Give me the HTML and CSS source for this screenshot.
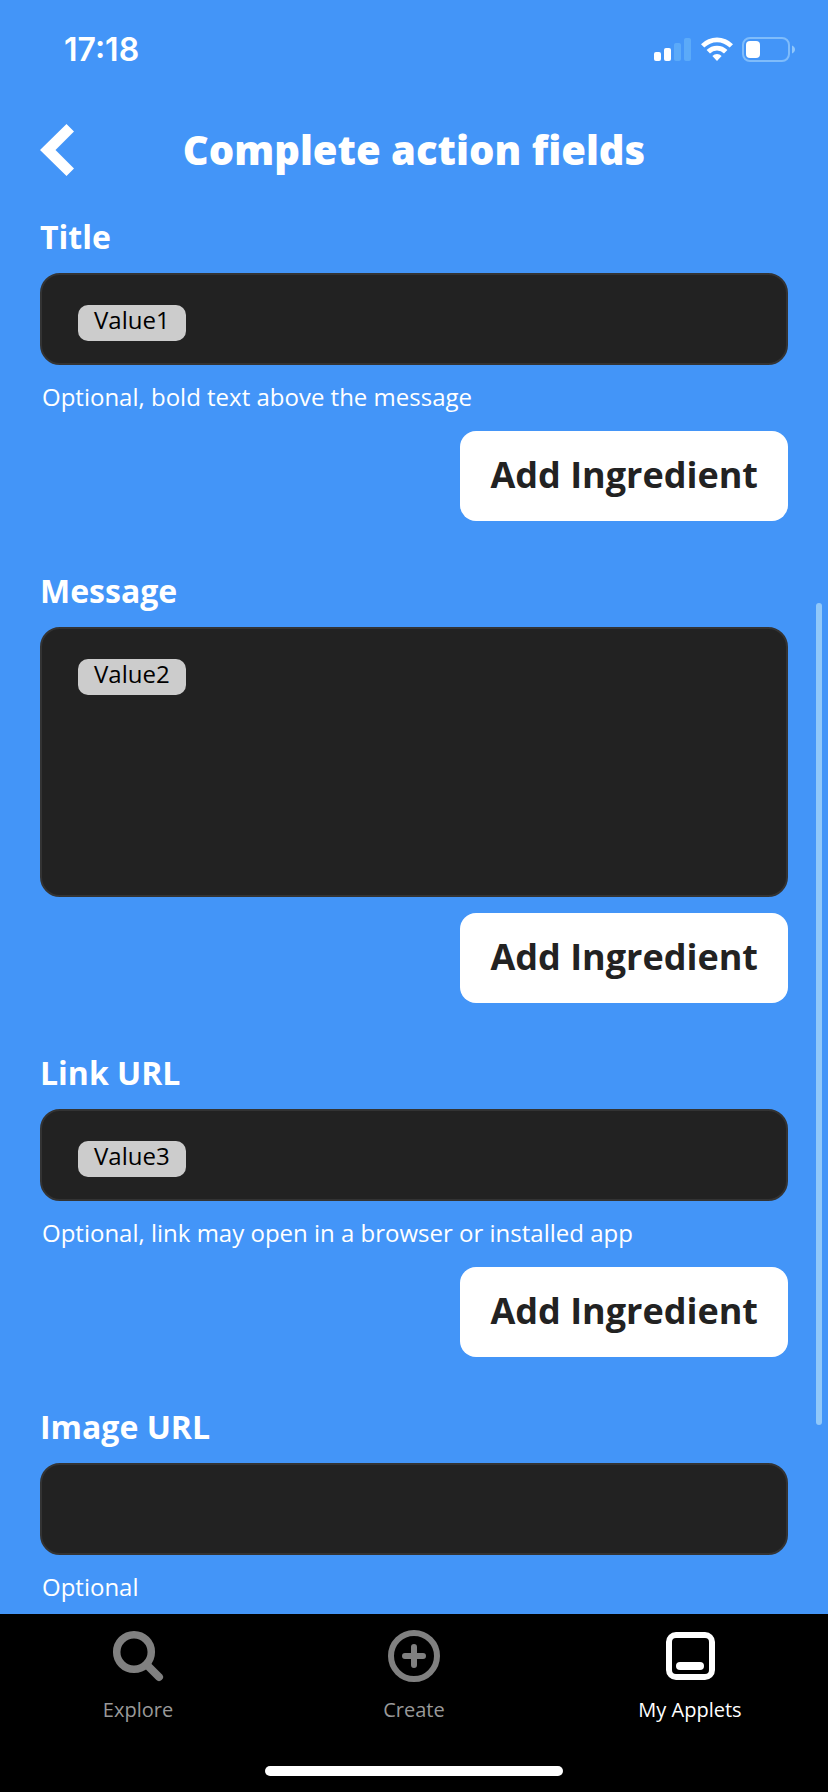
FILE: index.html
```html
<!DOCTYPE html>
<html lang="en">
<head>
<meta charset="utf-8">
<meta name="viewport" content="width=device-width, initial-scale=1">
<title>Complete action fields</title>
<link rel="stylesheet" href="styles.css">
</head>
<body>
<div class="screen">
  <div class="status">
    <span class="time">17:18</span>
    <div class="status-icons">
      <svg width="38" height="26" viewBox="0 0 38 26" aria-hidden="true">
        <g fill="#fff"><rect x="0" y="15" width="7" height="9" rx="2"/><rect x="10" y="11" width="7" height="13" rx="2"/></g>
        <g fill="#5baaf9"><rect x="20" y="6" width="7" height="18" rx="2"/><rect x="30" y="1" width="7" height="23" rx="2"/></g>
      </svg>
      <svg width="32" height="26" viewBox="0 0 32 26" aria-hidden="true">
        <path d="M0 7.2a22.5 22.5 0 0 1 32 0l-3.3 3.4a17.8 17.8 0 0 0-25.4 0z" fill="#fff"/>
        <path d="M5.6 13a14.7 14.7 0 0 1 20.8 0l-3.4 3.4a9.9 9.9 0 0 0-14 0z" fill="#fff"/>
        <path d="M11.4 19a6.5 6.5 0 0 1 9.2 0L16 24z" fill="#fff"/>
      </svg>
      <svg width="54" height="26" viewBox="0 0 54 26" aria-hidden="true">
        <rect x="1" y="1" width="46" height="23" rx="7" fill="none" stroke="#7fbcfb" stroke-width="2"/>
        <rect x="4" y="4" width="14" height="17" rx="4" fill="#fff"/>
        <path d="M50 8.500c4 1.500 4 6.500 0 8z" fill="#8fc6fb"/>
      </svg>
    </div>
  </div>

  <header class="header">
    <button class="back" type="button" aria-label="Back">
      <svg width="34" height="52" viewBox="0 0 34 52" aria-hidden="true"><path d="M26.500 0L34 7.500 15.500 26 34 44.500 26.500 52 0 26z" fill="#fff"/></svg>
    </button>
    <h1 class="title">Complete action fields</h1>
  </header>

  <main class="content">
    <form class="form">
      <section class="group">
        <label class="label" for="f-title">Title</label>
        <div class="box"><span class="chip">Value1</span><input class="entry" id="f-title" type="text"></div>
        <p class="hint">Optional, bold text above the message</p>
        <button class="add" type="button">Add Ingredient</button>
      </section>
      <section class="group">
        <label class="label" for="f-message">Message</label>
        <div class="box box-tall"><span class="chip">Value2</span><textarea class="entry" id="f-message"></textarea></div>
        <button class="add" type="button">Add Ingredient</button>
      </section>
      <section class="group">
        <label class="label" for="f-link">Link URL</label>
        <div class="box"><span class="chip">Value3</span><input class="entry" id="f-link" type="text"></div>
        <p class="hint">Optional, link may open in a browser or installed app</p>
        <button class="add" type="button">Add Ingredient</button>
      </section>
      <section class="group">
        <label class="label" for="f-image">Image URL</label>
        <div class="box"><input class="entry" id="f-image" type="text"></div>
        <p class="hint">Optional</p>
      </section>
    </form>
    <div class="scrollbar"></div>
  </main>

  <footer class="footer">
    <nav class="tabs">
      <a class="tab" href="#explore">
        <svg width="52" height="52" viewBox="0 0 52 52" fill="none" stroke="#808080" aria-hidden="true"><circle cx="22" cy="22" r="17.300" stroke-width="7.500"/><path d="M35 35L47 47" stroke-width="8" stroke-linecap="round"/></svg>
        Explore
      </a>
      <a class="tab" href="#create">
        <svg width="52" height="52" viewBox="0 0 52 52" fill="none" stroke="#808080" stroke-width="6" aria-hidden="true"><circle cx="26" cy="26" r="23"/><path d="M26 17v18M17 26h18" stroke-linecap="round"/></svg>
        Create
      </a>
      <a class="tab tab-active" href="#applets" aria-current="page">
        <svg width="52" height="52" viewBox="0 0 52 52" fill="none" stroke="#fff" aria-hidden="true"><rect x="5" y="5" width="43" height="42" rx="7" stroke-width="6"/><path d="M16 36h20" stroke-width="8" stroke-linecap="round"/></svg>
        My Applets
      </a>
    </nav>
    <div class="home"></div>
  </footer>
</div>
</body>
</html>
```
FILE: styles.css
```css
* { box-sizing: border-box; }

body {
  margin: 0;
  background: #4395f8;
  color: #fff;
  font-family: "Open Sans", "Noto Sans", sans-serif;
}

.screen {
  display: flex;
  flex-direction: column;
  height: 100vh;
  overflow: hidden;
}

.status {
  display: flex;
  justify-content: space-between;
  align-items: center;
  height: 100px;
  padding: 0 32px 0 64px;
}

.time { font: 600 32px/40px Inter, sans-serif; }

.status-icons { display: flex; gap: 9px; }

.header {
  display: grid;
  grid-template-columns: 34px 1fr 34px;
  align-items: center;
  height: 100px;
  padding: 0 40px;
}

.back {
  display: flex;
  padding: 0;
  border: 0;
  background: none;
}

.title {
  margin: 0;
  font-size: 40px;
  line-height: 48px;
  font-weight: 800;
  text-align: center;
}

.content {
  position: relative;
  flex: 1;
  min-height: 0;
  overflow: hidden;
}

.form {
  display: flex;
  flex-direction: column;
  gap: 50px;
  padding: 17px 40px 0;
}

.group {
  display: flex;
  flex-direction: column;
  gap: 16px;
}

.label {
  font-size: 32px;
  line-height: 40px;
  font-weight: 700;
}

.box {
  display: flex;
  align-items: flex-start;
  min-height: 92px;
  padding: 30px 36px 22px;
  border: 2px solid #333;
  border-radius: 20px;
  background: #222;
}

.box-tall { min-height: 270px; }

.chip {
  padding: 0 16px 6px;
  border-radius: 10px;
  background: #ccc;
  color: #000;
  font-size: 24px;
  line-height: 30px;
}

.entry {
  flex: 1;
  align-self: stretch;
  min-width: 0;
  padding: 0 8px;
  border: 0;
  outline: 0;
  resize: none;
  background: none;
  color: #fff;
  font: 24px/30px "Open Sans", "Noto Sans", sans-serif;
}

.hint {
  margin: 0;
  padding: 0 2px 2px;
  font-size: 24px;
  line-height: 32px;
  font-weight: 500;
}

.add {
  align-self: flex-end;
  padding: 22px 30px 24px;
  border: 0;
  border-radius: 16px;
  background: #fff;
  color: #222;
  font: 700 36px/44px "Open Sans", "Noto Sans", sans-serif;
}

.scrollbar {
  position: absolute;
  top: 28.5%;
  right: 6px;
  width: 6px;
  height: 58.1%;
  border-radius: 3px;
  background: #90c8fa;
}

.footer {
  display: flex;
  flex-direction: column;
  justify-content: space-between;
  align-items: center;
  height: 178px;
  padding: 16px 0;
  background: #000;
}

.tabs {
  display: grid;
  grid-template-columns: repeat(3, 1fr);
  width: 100%;
}

.tab {
  display: flex;
  flex-direction: column;
  align-items: center;
  gap: 16px;
  color: #999;
  font-size: 20px;
  line-height: 24px;
  font-weight: 500;
  text-decoration: none;
}

.tab-active { color: #fff; }

.home {
  width: 36%;
  height: 10px;
  border-radius: 5px;
  background: #fff;
}
```
